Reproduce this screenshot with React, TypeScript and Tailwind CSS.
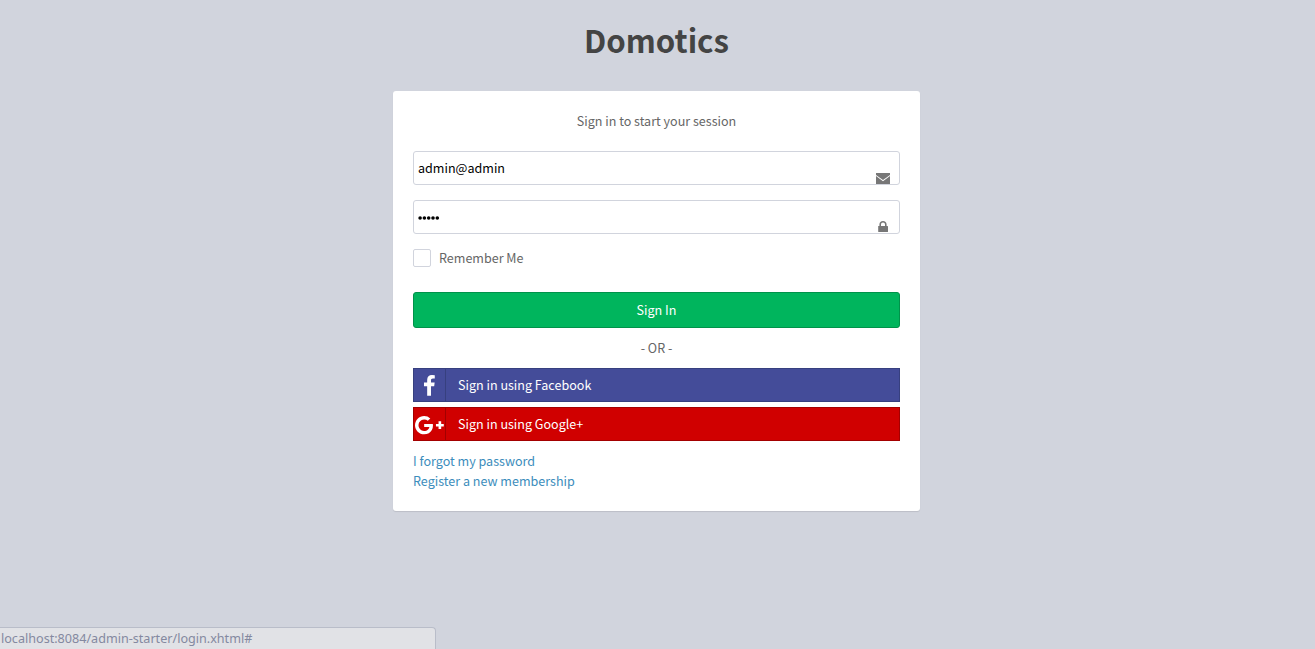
import React from "react";

function EnvelopeIcon() {
  return (
    <svg className="block h-[11px] w-[14px]" viewBox="0 0 14 11" fill="#777777">
      <path d="M0 0H14V1.9L7 7L0 1.9Z" />
      <path d="M0 3L7 8.2L14 3V11H0Z" />
    </svg>
  );
}

function LockIcon() {
  return (
    <svg className="block h-[11px] w-[10px]" viewBox="0 0 10 11" fill="#777777">
      <path d="M0.2 5H1.4V3.6C1.4 1.4 2.9 0 5 0S8.6 1.4 8.6 3.6V5H9.4Q10 5 10 5.6V10.4Q10 11 9.4 11H0.8Q0.2 11 0.2 10.4ZM3 5H7V3.6C7 2.3 6.2 1.5 5 1.5S3 2.3 3 3.6Z" />
    </svg>
  );
}

function PasswordDots() {
  return (
    <svg className="mt-[2px] block h-[4px] w-[22px]" viewBox="0 0 22 4" aria-label="Password">
      {[0, 1, 2, 3, 4].map((n) => (
        <circle key={n} cx={2.1 + n * 4.3} cy="2" r="1.8" />
      ))}
    </svg>
  );
}

function FacebookIcon() {
  return (
    <svg className="block h-[22.4px] w-[22.4px]" viewBox="0 0 1792 1792" fill="#ffffff">
      <path d="M1343 12v264h-157q-86 0-116 36t-30 108v189h293l-39 296h-254v759h-306v-759h-255v-296h255v-218q0-186 104-288.5t277-102.5q147 0 228 12z" />
    </svg>
  );
}

function GooglePlusIcon() {
  return (
    <svg className="block h-[22.4px] w-[28.8px] shrink-0" viewBox="0 0 2304 1792" fill="#ffffff">
      <path d="M1437 913q0 208-87 370.5t-248 254-369 91.5q-149 0-285-58t-234-156-156-234-58-285 58-285 156-234 234-156 285-58q286 0 491 192l-199 191q-117-113-292-113-123 0-227.5 62t-165.5 168.5-61 232.5 61 232.5 165.5 168.5 227.5 62q83 0 152.5-23t114.5-57.5 78.5-78.5 49-83 21.5-74h-416v-252h692q12 63 12 122zm867-122v210h-209v209h-210v-209h-209v-210h209v-209h210v209h209z" />
    </svg>
  );
}

export default function App() {
  return (
    <div className="relative flex h-[649px] w-full flex-col overflow-hidden bg-[#d1d4dd] font-['Noto_Sans_CJK_SC',sans-serif] text-[12.55px] leading-5 text-[#666666]">
      <h1 className="mt-5 flex h-10 items-center justify-center pr-[2px] text-[31.2px] leading-10 font-bold text-[#444444]">
        Domotics
      </h1>
      <main className="mt-[31px] ml-[393px] flex h-[420px] w-[527px] flex-col rounded-[3px] bg-white px-5 pt-5 shadow-[0_1px_1px_rgba(0,0,0,0.1)]">
        <p className="text-center">Sign in to start your session</p>
        <div className="relative mt-5 flex h-[34px] items-center rounded-[3px] border border-[#d1d4dd] pl-1 text-black">
          <span>admin@admin</span>
          <span className="absolute top-[21px] right-[9px]"><EnvelopeIcon /></span>
        </div>
        <div className="relative mt-[15px] flex h-[34px] items-center rounded-[3px] border border-[#d1d4dd] pl-1 text-black">
          <PasswordDots />
          <span className="absolute top-[20px] right-[11px]"><LockIcon /></span>
        </div>
        <label className="mt-[14px] flex h-5 items-center gap-2">
          <span className="size-[18px] rounded-[2px] border border-[#d1d4dd]" />
          <span>Remember Me</span>
        </label>
        <button className="mt-6 h-9 rounded-[3px] border border-[#00924a] bg-[#00b55d] text-white">Sign In</button>
        <p className="mt-[10px] text-center">- OR -</p>
        <a className="mt-[10px] flex h-[34px] items-center border border-[#37407f] bg-[#444c99] text-white">
          <span className="flex h-8 w-8 items-center justify-center border-r border-[#37407f] pt-[2px]"><FacebookIcon /></span>
          <span className="ml-3">Sign in using Facebook</span>
        </a>
        <a className="mt-[5px] flex h-[34px] items-center border border-[#a30000] bg-[#d00000] text-white">
          <span className="flex h-8 w-8 items-center justify-center border-r border-[#a30000] pt-[2px]"><GooglePlusIcon /></span>
          <span className="ml-3">Sign in using Google+</span>
        </a>
        <a className="mt-[10px] text-[#3c8dbc]">I forgot my password</a>
        <a className="text-[#3c8dbc]">Register a new membership</a>
      </main>
      <div className="absolute bottom-0 left-0 flex h-[22px] w-[436px] items-center rounded-tr-[4px] border-t border-r border-[#b9bdc9] bg-[#e1e2e6] pl-[1px] font-['Noto_Sans',sans-serif] text-[12.6px] text-[#8489a0]">
        localhost:8084/admin-starter/login.xhtml#
      </div>
    </div>
  );
}
